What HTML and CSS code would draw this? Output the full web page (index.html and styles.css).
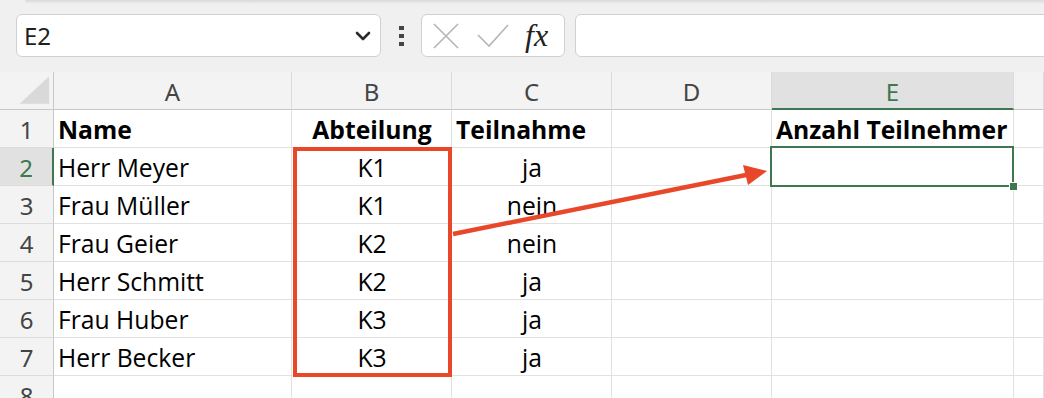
FILE: index.html
```html
<!DOCTYPE html>
<html lang="de">
<head>
  <meta charset="UTF-8" />
  <title>Abteilung – Teilnehmer</title>
  <link rel="stylesheet" href="styles.css">
</head>
<body>
  <div class="page">
    <div class="ribbon-edge"></div>

    <div class="formula-bar">
      <div class="name-box">
        <span>E2</span>
        <svg class="chevron" width="16" height="10" viewBox="0 0 16 10">
          <polyline points="2,2 8,8 14,2" fill="none" stroke="#2b2b2b" stroke-width="2.6" stroke-linecap="round" stroke-linejoin="round"/>
        </svg>
      </div>
      <div class="more-dots"><i></i><i></i><i></i></div>
      <div class="fx-box">
        <svg class="icon-cancel" width="26" height="26" viewBox="0 0 26 26">
          <path d="M1 1 L25 25 M25 1 L1 25" stroke="#b5b5b5" stroke-width="1.6" fill="none"/>
        </svg>
        <svg class="icon-enter" width="32" height="24" viewBox="0 0 32 24">
          <path d="M1 11 L12 22 L31 1" stroke="#b5b5b5" stroke-width="1.6" fill="none"/>
        </svg>
        <span class="fx">fx</span>
      </div>
      <div class="formula-input"></div>
    </div>

    <div class="sheet">
      <div class="corner">
        <svg width="54" height="38" viewBox="0 0 54 38">
          <polygon points="50,5 50,33 20,33" fill="#d9d9d9"/>
        </svg>
      </div>
      <div class="col-head">A</div>
      <div class="col-head">B</div>
      <div class="col-head">C</div>
      <div class="col-head">D</div>
      <div class="col-head active">E</div>
      <div class="col-head"></div>

      <div class="row-head">1</div>
      <div class="cell bold">Name</div>
      <div class="cell bold center">Abteilung</div>
      <div class="cell bold">Teilnahme</div>
      <div class="cell"></div>
      <div class="cell bold">Anzahl Teilnehmer</div>
      <div class="cell"></div>

      <div class="row-head active">2</div>
      <div class="cell">Herr Meyer</div>
      <div class="cell center">K1</div>
      <div class="cell center">ja</div>
      <div class="cell"></div>
      <div class="cell"></div>
      <div class="cell"></div>

      <div class="row-head">3</div>
      <div class="cell">Frau Müller</div>
      <div class="cell center">K1</div>
      <div class="cell center">nein</div>
      <div class="cell"></div>
      <div class="cell"></div>
      <div class="cell"></div>

      <div class="row-head">4</div>
      <div class="cell">Frau Geier</div>
      <div class="cell center">K2</div>
      <div class="cell center">nein</div>
      <div class="cell"></div>
      <div class="cell"></div>
      <div class="cell"></div>

      <div class="row-head">5</div>
      <div class="cell">Herr Schmitt</div>
      <div class="cell center">K2</div>
      <div class="cell center">ja</div>
      <div class="cell"></div>
      <div class="cell"></div>
      <div class="cell"></div>

      <div class="row-head">6</div>
      <div class="cell">Frau Huber</div>
      <div class="cell center">K3</div>
      <div class="cell center">ja</div>
      <div class="cell"></div>
      <div class="cell"></div>
      <div class="cell"></div>

      <div class="row-head">7</div>
      <div class="cell">Herr Becker</div>
      <div class="cell center">K3</div>
      <div class="cell center">ja</div>
      <div class="cell"></div>
      <div class="cell"></div>
      <div class="cell"></div>

      <div class="row-head">8</div>
      <div class="cell"></div>
      <div class="cell"></div>
      <div class="cell"></div>
      <div class="cell"></div>
      <div class="cell"></div>
      <div class="cell"></div>
    </div>

    <!-- annotations drawn over the sheet -->
    <div class="mark-box"></div>
    <div class="selection"><span class="fill-handle"></span></div>
    <svg class="arrow" width="1044" height="398" viewBox="0 0 1044 398">
      <line x1="453" y1="234" x2="746" y2="175" stroke="#e9472a" stroke-width="4.5"/>
      <polygon points="767,171 743,165 748,185" fill="#e9472a"/>
    </svg>
  </div>
</body>
</html>
```

FILE: styles.css
```css
:root {
  --toolbar-bg: #f0f0f0;
  --head-bg: #f3f3f3;
  --head-active: #e1e1e1;
  --head-line: #c8c8c8;
  --head-sep: #dcdcdc;
  --grid-line: #e1e1e1;
  --green: #3e7750;
  --red: #e9472a;
}

* { box-sizing: border-box; }

body {
  margin: 0;
  background: var(--toolbar-bg);
  font-family: 'Noto Sans', 'Open Sans', sans-serif;
  overflow: hidden;
}

.page {
  position: relative;
  width: 1044px;
  height: 398px;
  overflow: hidden;
}

.ribbon-edge {
  height: 4px;
  margin-left: 25px;
  border-bottom-left-radius: 6px;
  background: linear-gradient(#d9d9d9, var(--toolbar-bg));
}

/* formula bar */
.formula-bar {
  display: flex;
  align-items: center;
  height: 68px;
  padding: 10px 0 15px 16px;
}

.formula-bar > * { flex: none; }

.name-box {
  width: 365px;
  height: 43px;
  background: #fff;
  border: 1px solid #d0d0d0;
  border-radius: 6px;
  display: flex;
  align-items: center;
  justify-content: space-between;
  padding: 0 9px 0 7px;
  font-size: 24px;
  color: #1f1f1f;
}

.more-dots {
  display: flex;
  flex-direction: column;
  gap: 4px;
  margin: 0 17px 0 18px;
}

.more-dots i {
  width: 5px;
  height: 4px;
  background: #444;
}

.fx-box {
  width: 144px;
  height: 43px;
  background: #fff;
  border: 1px solid #d0d0d0;
  border-radius: 6px;
  display: flex;
  align-items: center;
  padding-left: 11px;
}

.icon-cancel { margin-right: 18px; }
.icon-enter { margin-right: 16px; margin-top: 1px; }

.fx {
  font-family: 'Liberation Serif', serif;
  font-style: italic;
  font-size: 32px;
  color: #222;
  line-height: 1;
  margin-top: -2px;
}

.formula-input {
  width: 500px;
  height: 43px;
  margin-left: 10px;
  background: #fff;
  border: 1px solid #d0d0d0;
  border-radius: 6px;
}

/* sheet grid */
.sheet {
  display: grid;
  grid-template-columns: 54px 238px 160px 160px 160px 242px 1fr;
  grid-auto-rows: 38px;
  background: #fff;
}

.corner,
.col-head,
.row-head {
  background: var(--head-bg);
  color: #444;
  font-size: 24px;
  line-height: 24px;
  display: flex;
  align-items: flex-end;
  justify-content: center;
  padding-bottom: 5px;
}

.corner {
  padding: 0;
  border-right: 1px solid var(--head-line);
  border-bottom: 1px solid var(--head-line);
}

.col-head {
  border-right: 1px solid var(--head-sep);
  border-bottom: 1px solid var(--head-line);
}

.row-head {
  border-right: 1px solid var(--head-line);
  border-bottom: 1px solid var(--head-sep);
}

.col-head.active {
  background: var(--head-active);
  color: var(--green);
  border-bottom: 2px solid var(--green);
  padding-bottom: 4px;
}

.row-head.active {
  background: var(--head-active);
  color: var(--green);
  border-right: 2px solid var(--green);
}

.cell {
  font-family: 'Open Sans', sans-serif;
  font-size: 24.7px;
  line-height: 25px;
  color: #000;
  display: flex;
  align-items: flex-end;
  padding: 0 3px 5px 4px;
  white-space: nowrap;
  border-right: 1px solid var(--grid-line);
  border-bottom: 1px solid var(--grid-line);
}

.cell.bold { font-weight: 700; }
.cell.center { justify-content: center; }

/* annotations */
.mark-box {
  position: absolute;
  left: 293px;
  top: 147px;
  width: 159px;
  height: 230px;
  border: 4px solid var(--red);
}

.selection {
  position: absolute;
  left: 770px;
  top: 146px;
  width: 244px;
  height: 41px;
  border: 2px solid var(--green);
}

.fill-handle {
  position: absolute;
  right: -6px;
  bottom: -6px;
  width: 9px;
  height: 9px;
  background: var(--green);
  border: 1px solid #fff;
}

.arrow {
  position: absolute;
  left: 0;
  top: 0;
  pointer-events: none;
}
```
